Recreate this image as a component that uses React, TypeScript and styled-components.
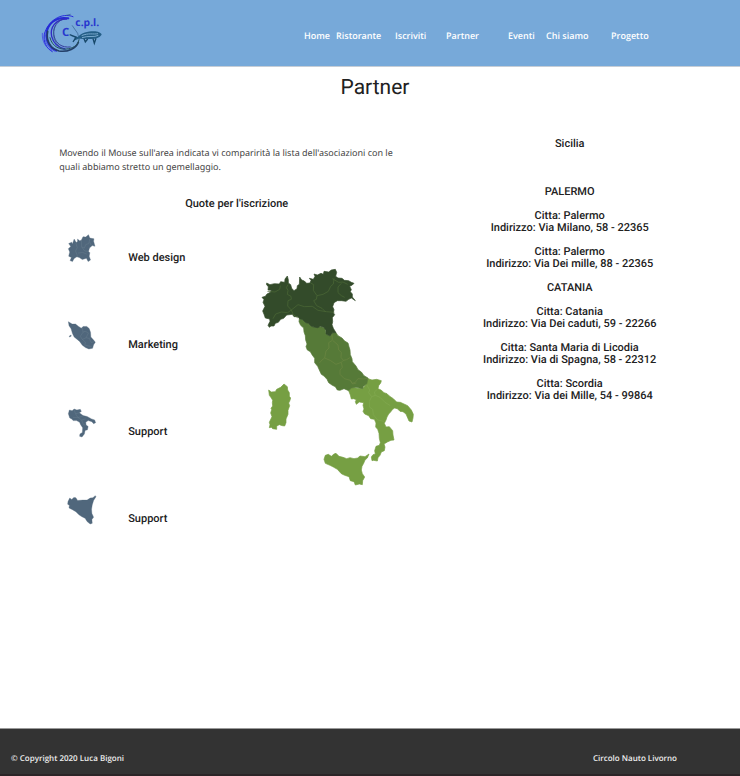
import React from "react";
import styled, { createGlobalStyle } from "styled-components";

const GlobalStyle = createGlobalStyle`
  * { box-sizing: border-box; }
  body {
    margin: 0;
    background: #fff;
    color: #212121;
    font-family: Roboto, sans-serif;
    text-rendering: geometricPrecision;
  }
  h1, h2, h3, p, ul, dl { margin: 0; padding: 0; }
`;

const Page = styled.div`
  display: flex;
  flex-direction: column;
  min-height: 100vh;
`;

const Header = styled.header`
  display: flex;
  align-items: center;
  justify-content: space-between;
  height: 67px;
  padding: 0 93px 0 41px;
  background: #77a9d9;
  border-bottom: 1px solid #c5cdd6;
`;

const LogoLink = styled.a`
  display: block;
  svg { display: block; }
`;

const NavList = styled.ul`
  display: grid;
  grid-template-columns: 32px 59px 51px 62px 38px 65px 36px;
  list-style: none;
`;

const NavLink = styled.a`
  color: #fff;
  font: 600 9px/12px "Open Sans", sans-serif;
  text-decoration: none;
  white-space: nowrap;
`;

const Main = styled.main`
  flex: 1;
`;

const Title = styled.h1`
  padding: 8px 0 0 10px;
  font-size: 21px;
  line-height: 26px;
  font-weight: 400;
  text-align: center;
`;

const Columns = styled.div`
  display: grid;
  grid-template-columns: 355fr 311fr;
  padding: 37px 2% 0 8%;
`;

const Intro = styled.p`
  padding: 8px 8px 0 0;
  color: #444;
  font: 400 9px/14px "Noto Sans", sans-serif;
`;

const Heading = styled.h2`
  font-size: 11px;
  line-height: 12px;
  font-weight: 500;
  text-align: center;
`;

const QuoteHeading = styled(Heading)`
  margin-top: 24px;
`;

const MapArea = styled.div`
  display: flex;
  justify-content: space-between;
  align-items: flex-start;
  margin-top: 24px;
`;

const RegionList = styled.ul`
  display: grid;
  gap: 57px;
  padding-left: 8px;
  list-style: none;
`;

const RegionItem = styled.li`
  display: flex;
  align-items: flex-end;
  gap: 31px;
  height: 30px;
  font-size: 11px;
  line-height: 12px;
  font-weight: 500;
`;

const MapFigure = styled.div`
  padding-top: 34px;
  svg { display: block; }
`;

const Addresses = styled.aside`
  text-align: center;
`;

const CityHeading = styled(Heading).attrs({ as: "h3" })<{ $first?: boolean }>`
  margin-top: ${(p) => (p.$first ? 36 : 12)}px;
`;

const Address = styled.p`
  margin-top: 12px;
  font-size: 11px;
  line-height: 12px;
  font-weight: 500;
`;

const Footer = styled.footer`
  display: flex;
  justify-content: space-between;
  height: 48px;
  padding: 24px 63px 0 11px;
  background: #333;
  border-top: 1px solid #999;
  border-bottom: 2px solid #2b2527;
  color: #eee;
  font: 600 8px/12px "Open Sans", sans-serif;
`;

const navItems = ["Home", "Ristorante", "Iscriviti", "Partner", "Eventi", "Chi siamo", "Progetto"];

const cities = [
  { name: "PALERMO", places: [["Palermo", "Via Milano, 58 - 22365"], ["Palermo", "Via Dei mille, 88 - 22365"]] },
  {
    name: "CATANIA",
    places: [
      ["Catania", "Via Dei caduti, 59 - 22266"],
      ["Santa Maria di Licodia", "Via di Spagna, 58 - 22312"],
      ["Scordia", "Via dei Mille, 54 - 99864"],
    ],
  },
];

const regions = [
  {
    label: "Web design",
    shape: "M41 57 50 53 52 58 57 44 63 54 67 51 67 44 73 49 78 47 83 37 91 38 99 31 103 41 115 43 114 50 118 65 110 63 102 70 99 80 103 84 101 94 105 105 98 110 93 100 81 104 72 98 65 96 57 101 52 110 45 107 49 98 41 94 44 82 40 72 47 66Z",
    seams: "M62 55 66 69 61 79 68 97M78 48 79 67 87 70 91 60 100 57 103 43M79 67 88 79 99 80M68 85 82 83 94 88M103 53 107 62",
    box: "36 29 88 88",
  },
  {
    label: "Marketing",
    shape: "M40 292 51 299 61 299 70 306 78 311 83 306 94 306 101 312 105 323 106 337 114 346 119 352 114 360 111 370 100 372 90 368 81 361 73 350 66 344 57 337 52 327 48 313 42 304ZM43 334 48 331 48 335 43 337Z",
    seams: "M81 310 83 323 75 335 81 344 92 339 99 325 89 320 83 323M92 339 101 341 105 338M81 344 90 352 88 361 108 365M101 341 107 353 118 350",
    box: "36 290 88 88",
  },
  {
    label: "Support",
    shape: "M40 58 43 47 51 49 57 44 65 47 75 45 78 51 72 55 83 63 95 66 108 73 117 76 120 84 114 87 109 81 98 78 91 83 92 91 98 95 96 105 89 107 87 117 80 126 73 124 74 117 81 113 82 99 76 90 73 83 64 78 54 78 50 73 44 70Z",
    seams: "M57 47 61 58 72 55M61 58 68 69 82 65M68 69 79 76 91 73M79 76 84 90 92 91M54 69 68 69",
    box: "36 41 88 88",
  },
  {
    label: "Support",
    shape: "M38 321 43 311 49 315 55 309 61 310 66 318 81 317 94 317 103 311 111 310 118 304 120 307 113 318 109 331 107 344 108 356 113 367 108 374 109 385 103 387 94 380 88 370 79 366 70 360 61 351 51 345 41 340 42 332 37 329Z",
    seams: "",
    box: "35 302 88 88",
  },
];

function Logo() {
  return (
    <svg width="64" height="42" viewBox="34 36 192 126" role="img" aria-label="c.p.l.">
      <g fill="none" strokeLinecap="round">
        <path d="M130 50C96 36 54 62 44 103 40 124 50 146 68 155" stroke="#292ddd" strokeWidth="3" />
        <path d="M116 55C77 48 50 74 50 107 51 128 62 144 80 152" stroke="#262bd5" strokeWidth="6" />
        <path d="M111 57C78 57 60 83 66 109 71 128 86 143 106 147" stroke="#302bc3" strokeWidth="4" />
        <path d="M98 58C77 68 68 88 74 111 79 130 96 144 122 141" stroke="#363c9c" strokeWidth="3" />
        <path d="M54 94C49 119 59 146 88 153 115 157 139 145 146 127" stroke="#243f69" strokeWidth="5" />
        <path d="M61 113C67 140 92 152 117 146 135 143 146 132 148 119" stroke="#24555f" strokeWidth="3" />
        <path d="M38 100C36 124 49 145 66 151M44 99C43 123 53 143 76 154" stroke="#3834e8" strokeWidth="2" />
        <path d="M78 76C60 106 79 143 111 151M110 46 122 43M128 77 144 100 148 117" stroke="#315c8b" strokeWidth="2" />
      </g>
      <path d="M124 109 145 111C155 98 174 94 192 94 205 94 214 98 216 104 210 113 198 117 184 117 169 118 157 116 147 116L132 122 138 113Z" fill="#245e86" />
      <path d="M120 104 139 111 130 126M163 116 167 126 174 117M190 116 194 130 199 115" stroke="#18486a" strokeWidth="4" fill="none" />
      <path d="M156 107C176 98 191 104 205 101M157 113C177 106 193 113 206 106" fill="none" stroke="#79a9cd" strokeWidth="3" />
      <g fill="#2838ce" fontFamily="Open Sans, sans-serif" fontWeight="700">
        <text x="137" y="77" fontSize="31">c.p.l.</text>
        <text x="97" y="107" fontSize="34">C</text>
      </g>
    </svg>
  );
}

function ItalyMap() {
  return (
    <svg width="154" height="220" viewBox="30 24 462 660" role="img" aria-label="Mappa d'Italia">
      <g strokeLinejoin="round" strokeWidth="2">
        <path fill="#769f43" stroke="#769f43" d="M354 356 366 360 380 358 394 362 392 369 386 377 384 386 393 390 402 398 411 401 418 408 430 416 440 426 451 427 462 432 473 437 484 450 490 463 489 474 486 486 477 483 474 476 468 462 459 455 450 454 442 446 434 444 428 448 421 457 416 462 411 471 408 480 403 490 408 501 418 500 428 512 429 525 432 540 423 541 412 546 402 552 405 561 403 572 394 576 390 586 384 593 382 603 371 601 366 602 364 591 369 584 376 582 374 572 378 559 388 556 391 548 388 535 387 520 383 508 377 501 378 489 373 478 362 476 356 467 344 462 339 454 342 447 339 436 341 428 328 426 319 433 316 425 319 419 311 416 304 417 301 405 296 392 304 382 322 385 338 386 348 373Z" />
        <path fill="#567a38" stroke="#567a38" d="M148 176 158 179 167 188 175 190 184 199 195 202 215 200 226 206 228 222 240 228 248 218 258 218 264 227 276 234 284 243 294 249 297 260 300 270 301 284 306 296 307 305 318 318 324 329 334 336 342 347 354 354 352 364 350 372 340 379 338 386 328 384 318 382 304 384 296 392 282 386 270 391 262 390 256 380 247 376 236 368 231 358 222 348 214 343 208 330 203 319 194 308 194 295 186 284 181 275 172 270 168 260 171 252 167 240 166 227 162 216 161 204 152 196 147 185Z" />
        <path fill="#334b2a" stroke="#334b2a" d="M50 69 60 74 73 71 88 72 92 65 104 67 105 57 112 48 115 59 115 69 122 74 125 85 132 92 141 86 142 77 148 73 149 51 155 60 163 63 170 70 180 69 183 61 178 55 190 58 195 49 192 42 202 45 213 40 220 43 222 34 236 36 244 30 256 28 260 37 257 49 264 54 276 55 283 61 296 62 304 67 312 70 307 75 299 79 304 89 301 95 307 102 307 111 316 122 304 114 296 118 288 124 275 122 262 122 252 128 248 140 252 149 250 158 254 164 247 173 248 185 246 194 250 205 258 218 248 218 240 228 228 222 228 211 221 202 211 199 203 203 195 202 184 199 175 190 167 188 158 179 148 176 144 170 132 170 127 163 110 165 101 175 92 178 85 187 76 190 72 198 63 198 58 202 54 196 60 184 59 177 46 174 42 163 38 153 45 139 39 127 42 119 36 112 46 109 51 102 61 97 64 91 54 90 55 80 50 75Z" />
        <g fill="#769f43" stroke="#769f43" transform="translate(0 330)">
          <path d="M56 60 64 66 76 65 80 58 92 52 102 42 112 50 113 60 118 68 118 79 122 84 119 94 116 99 119 107 114 121 114 133 108 147 108 158 104 168 97 167 88 164 80 168 80 178 68 176 64 172 58 173 60 164 58 157 66 140 62 129 65 119 63 115 68 108 67 98 68 91 64 84 58 76Z" />
          <path d="M222 268 226 256 235 253 244 259 252 252 258 250 267 259 279 262 290 266 300 263 312 266 323 264 330 258 345 260 357 252 352 264 345 270 341 280 336 289 334 300 337 311 344 321 338 332 337 344 328 342 316 345 312 335 301 332 297 320 284 316 274 311 262 298 250 291 240 286 226 280Z" />
        </g>
      </g>
      <g fill="none" stroke="#4d6a37" strokeWidth="2">
        <path d="M52 94 75 96 89 88 91 77M114 74 109 83 114 91 112 103 123 109 124 118 114 122 113 138 124 150 130 164M69 176 77 162 94 156 113 158 124 150 144 134 163 140 187 139 204 151 229 155 253 157M182 69 191 74 190 91 201 107 199 118 191 122 200 137 216 145 227 156M201 107 219 103 235 94 242 79 250 72 252 55M247 56 266 67 279 66 293 73M274 70 264 81 264 98 274 107 284 112M130 164 144 174" />
      </g>
      <g fill="none" strokeWidth="2">
        <path stroke="#6c8743" d="M246 223 247 241 236 248 237 264 228 273 224 294 216 300 208 309M249 242 264 255 266 270 274 277 273 292 280 301 290 299 301 292M224 294 242 302 258 313 274 307 280 301M274 307 277 322 270 330 270 343 283 356 301 361 306 370 316 367 324 356 341 357 351 355M301 361 308 372 319 369" />
        <path stroke="#82a950" d="M350 374 359 390 356 398 365 410 376 406 373 396 382 388M376 406 390 412 405 427 421 437M365 410 358 424 358 441 368 448 370 464 383 480 402 484" />
      </g>
    </svg>
  );
}

export default function App() {
  return (
    <Page>
      <GlobalStyle />
      <Header>
        <LogoLink href="#home"><Logo /></LogoLink>
        <nav>
          <NavList>
            {navItems.map((item) => (
              <li key={item}><NavLink href="#">{item}</NavLink></li>
            ))}
          </NavList>
        </nav>
      </Header>
      <Main>
        <Title>Partner</Title>
        <Columns>
          <section>
            <Intro>
              Movendo il Mouse sull'area indicata vi comparirità la lista dell'asociazioni con le quali abbiamo stretto un gemellaggio.
            </Intro>
            <QuoteHeading>Quote per l'iscrizione</QuoteHeading>
            <MapArea>
              <RegionList>
                {regions.map((r, i) => (
                  <RegionItem key={i}>
                    <svg width="30" height="30" viewBox={r.box} aria-hidden="true">
                      <path d={r.shape} fill="#50677c" stroke="#50677c" strokeLinejoin="round" />
                      <path d={r.seams} fill="none" stroke="#718594" />
                    </svg>
                    {r.label}
                  </RegionItem>
                ))}
              </RegionList>
              <MapFigure><ItalyMap /></MapFigure>
            </MapArea>
          </section>
          <Addresses>
            <Heading>Sicilia</Heading>
            {cities.map((city, i) => (
              <React.Fragment key={city.name}>
                <CityHeading $first={i === 0}>{city.name}</CityHeading>
                {city.places.map(([town, street]) => (
                  <Address key={street}>Citta: {town}<br />Indirizzo: {street}</Address>
                ))}
              </React.Fragment>
            ))}
          </Addresses>
        </Columns>
      </Main>
      <Footer>
        <span>© Copyright 2020 Luca Bigoni</span>
        <span>Circolo Nauto Livorno</span>
      </Footer>
    </Page>
  );
}
